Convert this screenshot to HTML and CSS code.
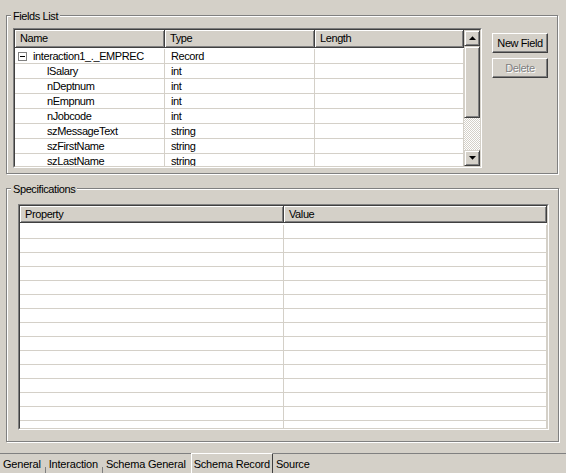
FILE: index.html
```html
<!DOCTYPE html>
<html lang="en">
<head>
  <meta charset="UTF-8" />
  <title>Schema Record</title>
  <link rel="stylesheet" href="styles.css">
</head>
<body>
  <div class="screen">
    <div class="group fields">
      <span class="group-label">Fields List</span>
      <div class="sunken fields-box">
        <div class="sunken-in">
          <div class="grid">
            <div class="head fields-cols">
              <div class="hcell">Name</div>
              <div class="hcell">Type</div>
              <div class="hcell">Length</div>
            </div>
            <div class="body">
              <div class="row fields-cols">
                <div class="cell parent"><svg class="minus" width="9" height="9" viewBox="0 0 9 9"><rect x="0.5" y="0.5" width="8" height="8" fill="#fff" stroke="#808080"/><line x1="2" y1="4.5" x2="7" y2="4.5" stroke="#000"/></svg>interaction1_._EMPREC</div>
                <div class="cell">Record</div>
                <div class="cell"></div>
              </div>
              <div class="row fields-cols">
                <div class="cell child">lSalary</div>
                <div class="cell">int</div>
                <div class="cell"></div>
              </div>
              <div class="row fields-cols">
                <div class="cell child">nDeptnum</div>
                <div class="cell">int</div>
                <div class="cell"></div>
              </div>
              <div class="row fields-cols">
                <div class="cell child">nEmpnum</div>
                <div class="cell">int</div>
                <div class="cell"></div>
              </div>
              <div class="row fields-cols">
                <div class="cell child">nJobcode</div>
                <div class="cell">int</div>
                <div class="cell"></div>
              </div>
              <div class="row fields-cols">
                <div class="cell child">szMessageText</div>
                <div class="cell">string</div>
                <div class="cell"></div>
              </div>
              <div class="row fields-cols">
                <div class="cell child">szFirstName</div>
                <div class="cell">string</div>
                <div class="cell"></div>
              </div>
              <div class="row fields-cols">
                <div class="cell child">szLastName</div>
                <div class="cell">string</div>
                <div class="cell"></div>
              </div>
            </div>
          </div>
          <div class="vscroll">
            <div class="sbtn"><svg width="7" height="4" viewBox="0 0 7 4"><polygon points="0,4 7,4 3.5,0.3" fill="#000"/></svg></div>
            <div class="sbtn thumb"></div>
            <div class="track"></div>
            <div class="sbtn"><svg width="7" height="4" viewBox="0 0 7 4"><polygon points="0,0 7,0 3.5,3.7" fill="#000"/></svg></div>
          </div>
        </div>
      </div>
      <div class="buttons">
        <button class="btn">New Field</button>
        <button class="btn disabled">Delete</button>
      </div>
    </div>

    <div class="group specs">
      <span class="group-label">Specifications</span>
      <div class="sunken specs-box">
        <div class="sunken-in">
          <div class="grid">
            <div class="head specs-cols">
              <div class="hcell">Property</div>
              <div class="hcell">Value</div>
            </div>
            <div class="body specs-body">
              <div class="row specs-cols"><div class="cell"></div><div class="cell"></div></div>
              <div class="row specs-cols"><div class="cell"></div><div class="cell"></div></div>
              <div class="row specs-cols"><div class="cell"></div><div class="cell"></div></div>
              <div class="row specs-cols"><div class="cell"></div><div class="cell"></div></div>
              <div class="row specs-cols"><div class="cell"></div><div class="cell"></div></div>
              <div class="row specs-cols"><div class="cell"></div><div class="cell"></div></div>
              <div class="row specs-cols"><div class="cell"></div><div class="cell"></div></div>
              <div class="row specs-cols"><div class="cell"></div><div class="cell"></div></div>
              <div class="row specs-cols"><div class="cell"></div><div class="cell"></div></div>
              <div class="row specs-cols"><div class="cell"></div><div class="cell"></div></div>
              <div class="row specs-cols"><div class="cell"></div><div class="cell"></div></div>
              <div class="row specs-cols"><div class="cell"></div><div class="cell"></div></div>
              <div class="row specs-cols"><div class="cell"></div><div class="cell"></div></div>
              <div class="row specs-cols"><div class="cell"></div><div class="cell"></div></div>
              <div class="row specs-cols"><div class="cell"></div><div class="cell"></div></div>
            </div>
          </div>
        </div>
      </div>
    </div>

    <div class="tabs">
      <span class="tab">General</span>
      <i class="sep"></i>
      <span class="tab">Interaction</span>
      <i class="sep"></i>
      <span class="tab">Schema General</span>
      <span class="tab on">Schema Record</span>
      <span class="tab">Source</span>
    </div>
  </div>
</body>
</html>
```

FILE: styles.css
```css
html, body {
  margin: 0;
  padding: 0;
}
body {
  width: 566px;
  height: 473px;
  overflow: hidden;
  background: #d4d0c8;
  color: #000;
  font-family: "Liberation Sans", Arial, sans-serif;
  font-size: 11px;
  letter-spacing: -0.4px;
}
.screen {
  display: flex;
  flex-direction: column;
}

/* etched group boxes */
.group {
  position: relative;
  box-sizing: border-box;
  margin-left: 6px;
  border: 1px solid #808080;
  box-shadow: 1px 1px 0 #fff, inset 1px 1px 0 #fff;
}
.group-label {
  position: absolute;
  left: 4px;
  top: -6px;
  padding: 0 2px;
  line-height: 13px;
  background: #d4d0c8;
}
.fields {
  margin-top: 15px;
  width: 552px;
  height: 159px;
  padding: 12px 0 0 6px;
  display: flex;
  align-items: flex-start;
}
.specs {
  margin-top: 14px;
  width: 553px;
  height: 254px;
  padding: 15px 0 0 11px;
}

/* sunken list frames */
.sunken {
  box-sizing: border-box;
  border: 1px solid;
  border-color: #808080 #fff #fff #808080;
}
.sunken-in {
  height: 100%;
  box-sizing: border-box;
  border: 1px solid;
  border-color: #404040 #d4d0c8 #d4d0c8 #404040;
  background: #fff;
  display: flex;
  overflow: hidden;
}
.fields-box {
  width: 469px;
  height: 140px;
}
.specs-box {
  width: 531px;
  height: 226px;
}
.grid {
  flex: 1;
  overflow: hidden;
}
.fields-cols {
  display: grid;
  grid-template-columns: 150px 150px 149px;
}
.specs-cols {
  display: grid;
  grid-template-columns: 264px 263px;
}
.head {
  background: #d4d0c8;
}
.hcell {
  box-sizing: border-box;
  height: 18px;
  line-height: 17px;
  padding-left: 5px;
  border-right: 1px solid #404040;
  border-bottom: 1px solid #404040;
  box-shadow: inset 1px 1px 0 #fff, inset -1px -1px 0 #808080;
  white-space: nowrap;
}
.specs .hcell {
  height: 17px;
  line-height: 16px;
}
.body {
  padding-top: 1px;
}
.specs-body {
  padding-top: 2px;
}
.row {
  height: 15px;
  box-sizing: border-box;
  border-bottom: 1px solid #d4d0c8;
}
.specs-body .row {
  height: 14px;
}
.cell {
  box-sizing: border-box;
  line-height: 14px;
  padding-left: 6px;
  border-right: 1px solid #d4d0c8;
  white-space: nowrap;
  overflow: hidden;
}
.cell.parent {
  padding-left: 3px;
  display: flex;
  align-items: center;
}
.minus {
  flex: none;
  margin-right: 6px;
}
.cell.child {
  padding-left: 32px;
}

/* scrollbar */
.vscroll {
  width: 16px;
  display: flex;
  flex-direction: column;
}
.sbtn {
  box-sizing: border-box;
  height: 16px;
  border: 1px solid;
  border-color: #d4d0c8 #404040 #404040 #d4d0c8;
  box-shadow: inset 1px 1px 0 #fff, inset -1px -1px 0 #808080;
  background: #d4d0c8;
  display: flex;
  align-items: center;
  justify-content: center;
}
.thumb {
  height: 72px;
}
.track {
  flex: 1;
  background: repeating-conic-gradient(#fff 0 25%, #d4d0c8 0 50%) 0 0 / 2px 2px;
}

/* push buttons */
.buttons {
  margin: 5px 0 0 10px;
  display: flex;
  flex-direction: column;
  gap: 5px;
}
.btn {
  box-sizing: border-box;
  width: 56px;
  height: 20px;
  padding: 0;
  font: inherit;
  letter-spacing: inherit;
  color: #000;
  background: #d4d0c8;
  border: 1px solid;
  border-color: #fff #404040 #404040 #fff;
  box-shadow: inset -1px -1px 0 #808080;
}
.btn.disabled {
  color: #808080;
  text-shadow: 1px 1px 0 #fff;
}

/* bottom tabs */
.tabs {
  margin-top: 11px;
  height: 20px;
  box-sizing: border-box;
  border-top: 1px solid #808080;
  display: flex;
  letter-spacing: -0.2px;
}
.tab {
  padding: 0 4px 0 3px;
  line-height: 20px;
  white-space: nowrap;
}
.sep {
  align-self: flex-end;
  width: 1px;
  height: 6px;
  background: #808080;
}
.tab.on {
  margin: -1px 0 0 1px;
  padding: 0 2px;
  line-height: 21px;
  border-top: 1px solid #fff;
  border-left: 1px solid #fff;
  border-right: 1px solid #404040;
}
.tab.on + .tab {
  padding-left: 3px;
}
```
